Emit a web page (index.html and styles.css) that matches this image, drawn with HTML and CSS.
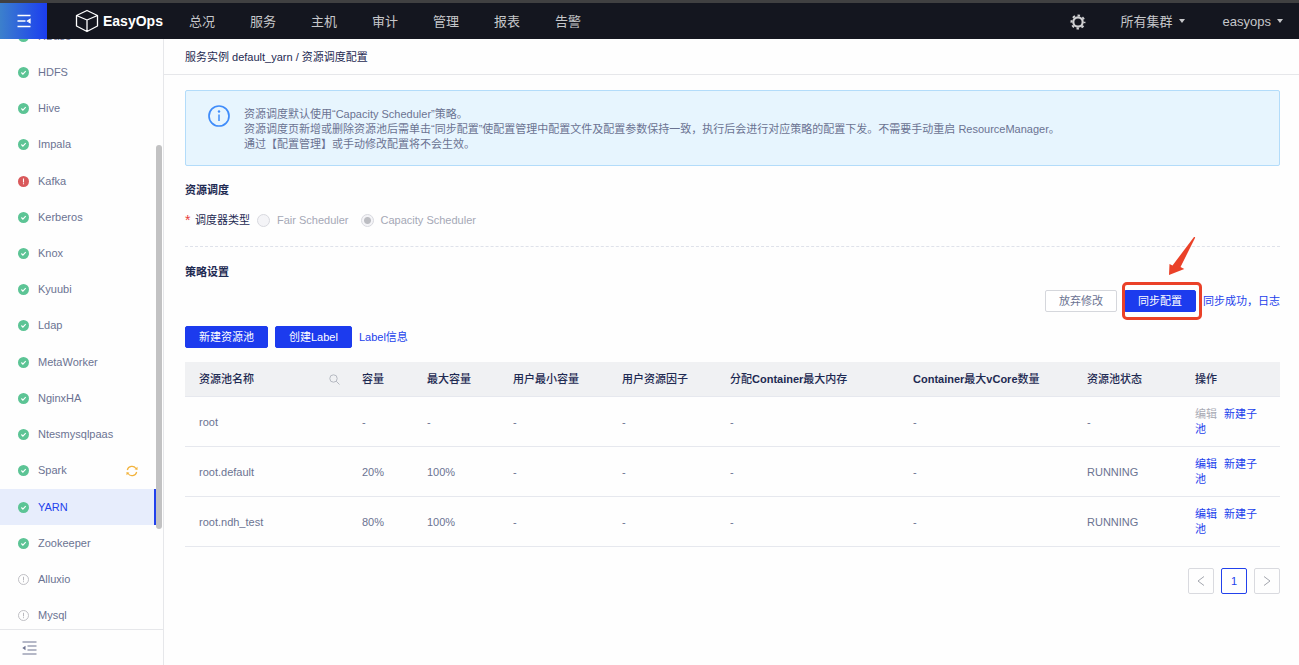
FILE: index.html
```
<!DOCTYPE html>
<html lang="zh-CN">
<head>
	<meta charset="UTF-8">
	<meta name="viewport" content="width=device-width, initial-scale=1.0">
	<link rel="stylesheet" href="styles.css">
	<title>EasyOps - 资源调度配置</title>
</head>
<body>

<!-- shared status icons -->
<svg class="sprite" aria-hidden="true">
	<symbol id="ok" viewBox="0 0 11 11">
		<circle cx="5.5" cy="5.5" r="5.5" fill="#5cc495"/>
		<path d="M3.4 5.5l1.5 1.6 2.8-3" fill="none" stroke="#fff" stroke-width="1.1"/>
	</symbol>
	<symbol id="error" viewBox="0 0 11 11">
		<circle cx="5.5" cy="5.5" r="5.5" fill="#d9595b"/>
		<path d="M5.5 2.6v3.8M5.5 7.2v1.1" stroke="#fff" stroke-width="1.1"/>
	</symbol>
	<symbol id="idle" viewBox="0 0 11 11">
		<circle cx="5.5" cy="5.5" r="5" fill="none" stroke="#b9b9be" stroke-width=".9"/>
		<path d="M5.5 2.8v3.6M5.5 7.2v1" stroke="#b9b9be"/>
	</symbol>
</svg>

<header class="topbar">
	<button class="menu-btn" aria-label="菜单">
		<svg width="14" height="14" viewBox="0 0 14 14" stroke="#fff" stroke-width="1.3">
			<path d="M.5 1.5h13M.5 7h8M.5 12.5h13"/>
			<path d="M10.5 7l2.500-1.500v3z" fill="#fff"/>
		</svg>
	</button>
	<a class="logo" href="#">
		<svg width="24" height="24" viewBox="0 0 24 24" fill="none" stroke="#fff" stroke-width="1.3" stroke-linejoin="round">
			<path d="M12 1.5l10.500 5v10.500L12 22.500 1.500 17V6.500zM1.500 6.500L12 11l10.500-4.500M12 11v11.500"/>
		</svg>
		EasyOps
	</a>
	<nav class="nav">
		<a href="#">总况</a>
		<a href="#">服务</a>
		<a href="#">主机</a>
		<a href="#">审计</a>
		<a href="#">管理</a>
		<a href="#">报表</a>
		<a href="#">告警</a>
	</nav>
	<div class="user-area">
		<button class="gear" aria-label="设置">
			<svg width="16" height="16" viewBox="0 0 16 16" fill="none" stroke="#d0d0d2">
				<circle cx="8" cy="8" r="4.7" stroke-width="2.2"/>
				<circle cx="8" cy="8" r="6.5" stroke-width="2" stroke-dasharray="2.5 2.605" stroke-dashoffset="1.25"/>
			</svg>
		</button>
		<button class="drop">所有集群 <span class="caret"></span></button>
		<button class="drop">easyops <span class="caret"></span></button>
	</div>
</header>

<div class="layout">
	<aside class="sidebar">
		<div class="scroller">
			<ul class="services">
				<li><a href="#"><svg class="status"><use href="#ok"/></svg>HBase</a></li>
				<li><a href="#"><svg class="status"><use href="#ok"/></svg>HDFS</a></li>
				<li><a href="#"><svg class="status"><use href="#ok"/></svg>Hive</a></li>
				<li><a href="#"><svg class="status"><use href="#ok"/></svg>Impala</a></li>
				<li><a href="#"><svg class="status"><use href="#error"/></svg>Kafka</a></li>
				<li><a href="#"><svg class="status"><use href="#ok"/></svg>Kerberos</a></li>
				<li><a href="#"><svg class="status"><use href="#ok"/></svg>Knox</a></li>
				<li><a href="#"><svg class="status"><use href="#ok"/></svg>Kyuubi</a></li>
				<li><a href="#"><svg class="status"><use href="#ok"/></svg>Ldap</a></li>
				<li><a href="#"><svg class="status"><use href="#ok"/></svg>MetaWorker</a></li>
				<li><a href="#"><svg class="status"><use href="#ok"/></svg>NginxHA</a></li>
				<li><a href="#"><svg class="status"><use href="#ok"/></svg>Ntesmysqlpaas</a></li>
				<li>
					<a href="#"><svg class="status"><use href="#ok"/></svg>Spark
						<svg class="reload" width="12" height="12" viewBox="0 0 12 12" fill="none" stroke="#f2b33d" stroke-width="1.2">
							<path d="M1.300 5A4.800 4.800 0 0 1 10 3.500M10.700 7A4.800 4.800 0 0 1 2 8.500"/>
							<path d="M11.500 1.800v3.200l-3-.7zM.5 10.200V7l3 .7z" fill="#f2b33d" stroke="none"/>
						</svg>
					</a>
				</li>
				<li class="active"><a href="#"><svg class="status"><use href="#ok"/></svg>YARN</a></li>
				<li><a href="#"><svg class="status"><use href="#ok"/></svg>Zookeeper</a></li>
				<li><a href="#"><svg class="status"><use href="#idle"/></svg>Alluxio</a></li>
				<li><a href="#"><svg class="status"><use href="#idle"/></svg>Mysql</a></li>
			</ul>
			<div class="thumb"></div>
		</div>
		<div class="collapse">
			<button aria-label="收起">
				<svg width="15" height="14" viewBox="0 0 15 14" stroke="#6d7390" stroke-width="1.2">
					<path d="M.5 1h14M5.500 5h9M5.500 9h9M.5 13h14"/>
					<path d="M.3 7L3.500 4.800v4.400z" fill="#6d7390" stroke="none"/>
				</svg>
			</button>
		</div>
	</aside>

	<main class="main">
		<div class="crumbs">服务实例 default_yarn / 资源调度配置</div>

		<div class="content">
			<div class="alert">
				<svg width="22" height="22" viewBox="0 0 22 22" fill="none" stroke="#3f8cfa">
					<circle cx="11" cy="11" r="10" stroke-width="1.7"/>
					<path d="M11 9.500v6.500" stroke-width="1.5"/>
					<circle cx="11" cy="6.5" r="1.2" fill="#3f8cfa" stroke="none"/>
				</svg>
				<div class="alert-text">
					<p>资源调度默认使用“Capacity Scheduler”策略。</p>
					<p>资源调度页新增或删除资源池后需单击“同步配置”使配置管理中配置文件及配置参数保持一致，执行后会进行对应策略的配置下发。不需要手动重启 ResourceManager。</p>
					<p>通过【配置管理】或手动修改配置将不会生效。</p>
				</div>
			</div>

			<h2>资源调度</h2>
			<div class="scheduler" role="radiogroup" aria-labelledby="type-label">
				<span class="required">*</span>
				<span class="type-label" id="type-label">调度器类型</span>
				<label><input type="radio" name="scheduler" disabled>Fair Scheduler</label>
				<label><input type="radio" name="scheduler" checked disabled>Capacity Scheduler</label>
			</div>

			<h2>策略设置</h2>
			<div class="sync-bar">
				<button class="btn">放弃修改</button>
				<div class="marked">
					<button class="btn primary">同步配置</button>
					<span class="mark-box"></span>
					<svg class="mark-arrow" width="28" height="40" viewBox="0 0 28 40">
						<path d="M26 1Q27.500.5 27 2L12.500 31l3.800 2L1 39l.5-11 3 1.500z" fill="#ea4128"/>
					</svg>
				</div>
				<a href="#">同步成功，日志</a>
			</div>

			<div class="actions">
				<button class="btn primary">新建资源池</button>
				<button class="btn primary">创建Label</button>
				<a href="#">Label信息</a>
			</div>

			<table>
				<colgroup>
					<col class="c-name"><col class="c-cap"><col class="c-max"><col class="c-min"><col class="c-factor">
					<col class="c-mem"><col class="c-core"><col class="c-state"><col class="c-ops">
				</colgroup>
				<thead>
					<tr>
						<th>
							<div class="name-head">资源池名称
								<button aria-label="搜索">
									<svg width="11" height="11" viewBox="0 0 11 11" fill="none" stroke="#b5b9c1">
										<circle cx="4.5" cy="4.5" r="3.7"/><path d="M7.200 7.200l3.300 3.300"/>
									</svg>
								</button>
							</div>
						</th>
						<th>容量</th>
						<th>最大容量</th>
						<th>用户最小容量</th>
						<th>用户资源因子</th>
						<th>分配<b>Container</b>最大内存</th>
						<th><b>Container</b>最大<b>vCore</b>数量</th>
						<th>资源池状态</th>
						<th>操作</th>
					</tr>
				</thead>
				<tbody>
					<tr>
						<td>root</td><td>-</td><td>-</td><td>-</td><td>-</td><td>-</td><td>-</td><td>-</td>
						<td><a class="off" aria-disabled="true">编辑</a><a href="#">新建子池</a></td>
					</tr>
					<tr>
						<td>root.default</td><td>20%</td><td>100%</td><td>-</td><td>-</td><td>-</td><td>-</td><td>RUNNING</td>
						<td><a href="#">编辑</a><a href="#">新建子池</a></td>
					</tr>
					<tr>
						<td>root.ndh_test</td><td>80%</td><td>100%</td><td>-</td><td>-</td><td>-</td><td>-</td><td>RUNNING</td>
						<td><a href="#">编辑</a><a href="#">新建子池</a></td>
					</tr>
				</tbody>
			</table>

			<div class="pager">
				<button aria-label="上一页"><svg width="8" height="10" viewBox="0 0 8 10"><path d="M7 .5L1 5l6 4.500"/></svg></button>
				<button class="current">1</button>
				<button aria-label="下一页"><svg width="8" height="10" viewBox="0 0 8 10"><path d="M1 .5L7 5 1 9.500"/></svg></button>
			</div>
		</div>
	</main>
</div>

</body>
</html>
```
FILE: styles.css
```
*{
	box-sizing: border-box;
}

body{
	margin: 0;
	height: 100vh;
	display: flex;
	flex-direction: column;
	font: 11px/15px "Liberation Sans", "Noto Sans CJK SC", sans-serif;
	color: #6b7392;
	background-color: #fefefe;
}

a{
	color: #2241ec;
	text-decoration: none;
}

button{
	padding: 0;
	border: 0;
	background: none;
	font: inherit;
	color: inherit;
	cursor: pointer;
}

svg{
	display: block;
	flex: none;
}

.sprite{
	position: absolute;
	width: 0;
	height: 0;
}

/* top bar */
.topbar{
	flex: none;
	display: flex;
	align-items: stretch;
	height: 39px;
	border-top: 3px solid #404041;
	background-color: #14161f;
	color: #c6c7ca;
	font-size: 13px;
}

.menu-btn{
	display: flex;
	align-items: center;
	justify-content: center;
	width: 47px;
	background: linear-gradient(90deg, #3c80cc, #1b3df0);
}

.logo{
	display: flex;
	align-items: center;
	gap: 4px;
	margin-left: 28px;
	color: #fff;
	font-size: 14px;
	font-weight: bold;
}

.nav{
	display: flex;
	align-items: center;
	gap: 35px;
	margin-left: 26px;
}
	.nav a{
		color: inherit;
	}

.user-area{
	display: flex;
	align-items: center;
	gap: 38px;
	margin-left: auto;
	padding-right: 16px;
}
	.gear{
		margin-right: -3px;
		padding-top: 2px;
	}

.drop{
	display: flex;
	align-items: center;
	gap: 6px;
}

.caret{
	border: 3px solid transparent;
	border-top: 4px solid #c6c7ca;
	border-bottom: 0;
}

/* sidebar */
.layout{
	flex: 1;
	display: flex;
	min-height: 0;
}

.sidebar{
	flex: none;
	display: flex;
	flex-direction: column;
	width: 164px;
	border-right: 1px solid #e6e7ea;
}

.scroller{
	position: relative;
	flex: 1;
	display: flex;
	flex-direction: column;
	min-height: 0;
	overflow: hidden;
}

.services{
	flex: 1;
	display: flex;
	flex-direction: column;
	margin: -21px 7px -5px 0;
	padding: 0;
	list-style: none;
}
	.services li{
		flex: 1 0 36px;
		display: flex;
	}
	.services a{
		flex: 1;
		display: flex;
		align-items: center;
		padding: 0 18px;
		color: inherit;
	}
	.services .active{
		border-right: 2px solid #2241ec;
		background-color: #e7edfc;
	}
	.services .active a{
		color: #2241ec;
	}

.status{
	width: 11px;
	height: 11px;
	margin-right: 9px;
}

.reload{
	margin-left: auto;
}

.thumb{
	position: absolute;
	right: 1px;
	top: 18%;
	height: 65%;
	width: 6px;
	border-radius: 3px;
	background-color: #c2c2c3;
}

.collapse{
	flex: none;
	display: flex;
	padding: 11px 22px 10px;
	border-top: 1px solid #e6e7ea;
}

/* content */
.main{
	flex: 1;
	min-width: 0;
	overflow: auto;
}

.crumbs{
	padding: 11px 21px 9px;
	border-bottom: 1px solid #e6e7ea;
	color: #1e2a52;
}

.content{
	padding: 15px 19px 20px 21px;
}

.alert{
	display: flex;
	gap: 14px;
	padding: 14px 22px 13px;
	border: 1px solid #b3dcfa;
	border-radius: 2px;
	background-color: #e7f5fe;
}
	.alert-text{
		padding-top: 2px;
	}
	.alert p{
		margin: 0;
	}

h2{
	margin: 16px 0 0;
	font-size: 11px;
	line-height: 16px;
	color: #1e2a52;
}

.scheduler{
	display: flex;
	align-items: center;
	margin: 14px 0 17px;
	padding-bottom: 18px;
	border-bottom: 1px dashed #dfe2ea;
	line-height: 16px;
}
	.required{
		width: 10px;
		color: #e8403c;
		font-size: 14px;
	}
	.type-label{
		margin-right: 7px;
		color: #1e2a52;
	}
	.scheduler label{
		display: flex;
		align-items: center;
		gap: 7px;
		margin-right: 12px;
		color: #a5a8b6;
	}
	.scheduler input{
		appearance: none;
		width: 13px;
		height: 13px;
		margin: 0;
		border: 1px solid #d8d9df;
		border-radius: 50%;
		background-color: #f4f4f7;
	}
	.scheduler input:checked{
		background-image: radial-gradient(circle, #bcbdc2 3px, transparent 4px);
	}

.sync-bar{
	display: flex;
	align-items: center;
	justify-content: flex-end;
	gap: 7px;
	margin-top: 10px;
}

.actions{
	display: flex;
	align-items: center;
	gap: 7px;
	margin: 14px 0;
}

.btn{
	height: 22px;
	padding: 0 13px;
	border: 1px solid #d5d7dc;
	border-radius: 2px;
	background-color: #fff;
}
	.btn.primary{
		border-color: #1c3bee;
		background-color: #1c3bee;
		color: #fff;
	}

/* red callout around the sync button */
.marked{
	position: relative;
}
	.mark-box{
		position: absolute;
		inset: -8px -6px -8px -2px;
		border: 3px solid #ea4128;
		border-radius: 5px;
		pointer-events: none;
	}
	.mark-arrow{
		position: absolute;
		left: 44px;
		bottom: 36px;
		pointer-events: none;
	}

table{
	width: 100%;
	table-layout: fixed;
	border-collapse: separate;
	border-spacing: 0;
}
	.c-name{ width: 163px; }
	.c-cap{ width: 65px; }
	.c-max{ width: 86px; }
	.c-min{ width: 109px; }
	.c-factor{ width: 108px; }
	.c-mem{ width: 183px; }
	.c-core{ width: 174px; }
	.c-state{ width: 108px; }
	.c-ops{ width: 99px; }

th, td{
	padding: 10px 14px 9px;
	border-bottom: 1px solid #e6e8ee;
	text-align: left;
}

th{
	background-color: #f0f1f3;
	color: #1e2a52;
	font-weight: 500;
	white-space: nowrap;
}

td a + a{
	margin-left: 7px;
}

td .off{
	color: #a9abb5;
}

.name-head{
	display: flex;
	align-items: center;
	justify-content: space-between;
	margin-right: -6px;
}

.pager{
	display: flex;
	justify-content: flex-end;
	gap: 7px;
	margin-top: 21px;
}
	.pager button{
		display: flex;
		align-items: center;
		justify-content: center;
		width: 26px;
		height: 26px;
		border: 1px solid #d9dadf;
		border-radius: 2px;
	}
	.pager .current{
		border-color: #2241ec;
		color: #2241ec;
	}
	.pager path{
		fill: none;
		stroke: #a3a6ae;
	}
```
